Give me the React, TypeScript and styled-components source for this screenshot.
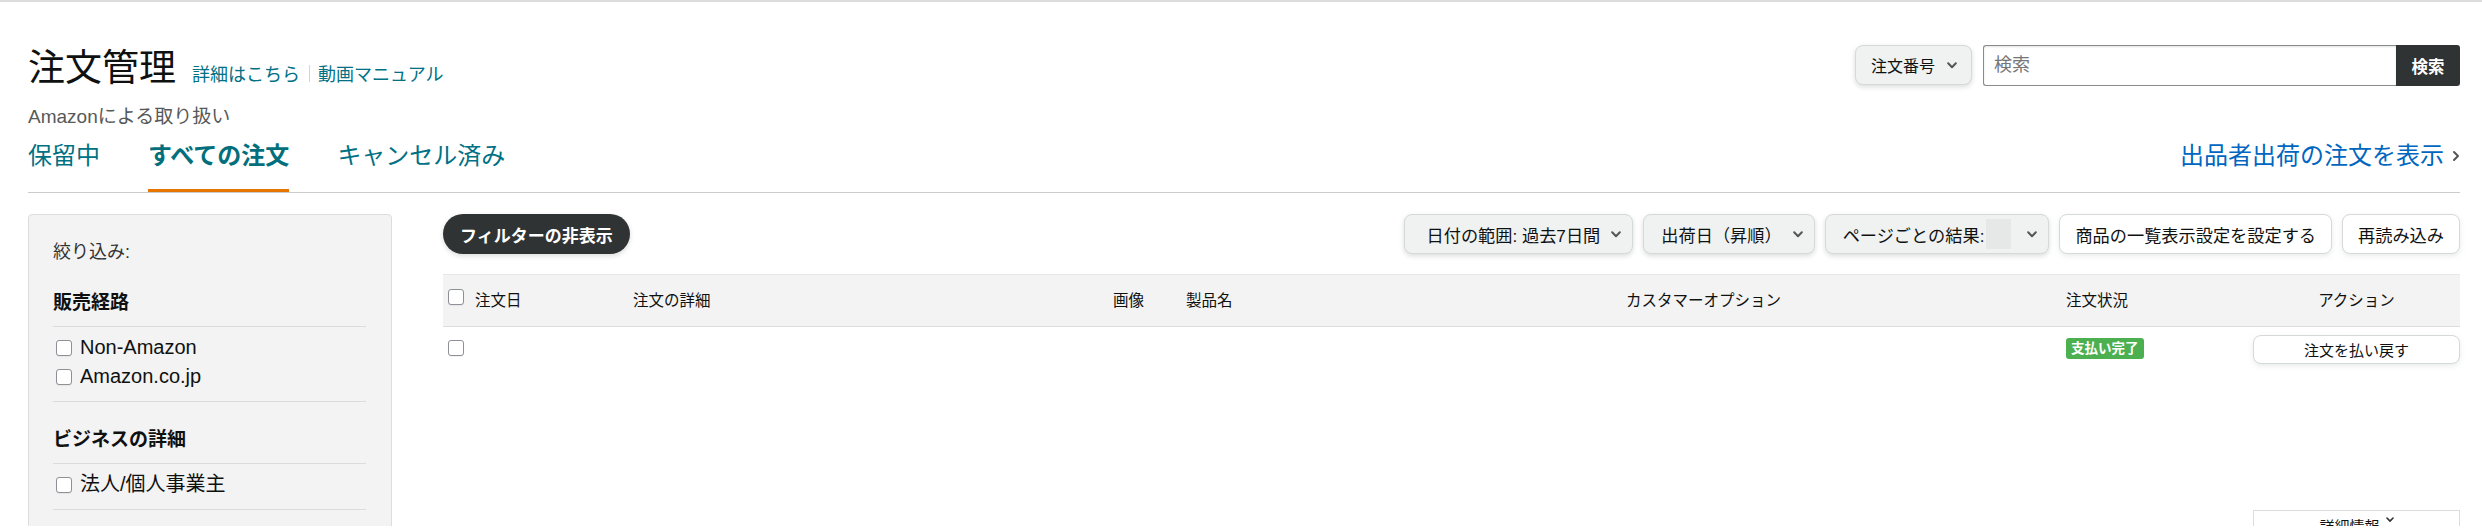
import React from 'react';
import styled, { createGlobalStyle } from 'styled-components';

const GlobalStyle = createGlobalStyle`
  html, body { margin: 0; padding: 0; background: #ffffff; }
  body {
    font-family: "Liberation Sans", "Noto Sans CJK JP", sans-serif;
    color: #0f1111;
  }
  *, *::before, *::after { box-sizing: border-box; }
  button, input { font-family: inherit; }
`;

const Page = styled.div`
  border-top: 2px solid #dcdcdc;
  padding: 0 22px 0 28px;
  height: 526px;
  overflow: hidden;
`;

const HeaderRow = styled.header`
  display: flex;
  justify-content: space-between;
  align-items: flex-start;
  padding-top: 43px;
`;

const TitleBlock = styled.div`
  padding-top: 2px;
`;

const TitleLine = styled.div`
  display: flex;
  align-items: baseline;
`;

const Title = styled.h1`
  margin: 0 16px 0 0;
  font-size: 37px;
  line-height: 44px;
  font-weight: 400;
  color: #0f1111;
`;

const HelpLink = styled.a`
  font-size: 18px;
  line-height: 22px;
  color: #007185;
  text-decoration: none;
`;

const LinkSep = styled.span`
  display: inline-block;
  width: 1px;
  height: 17px;
  margin: 0 8px 0 9px;
  background: #d5d5d5;
  position: relative;
  top: 1px;
`;

const Subtitle = styled.div`
  margin-top: 16px;
  font-size: 19px;
  line-height: 20px;
  color: #565959;
`;

const SearchForm = styled.form`
  display: flex;
  align-items: flex-start;
  margin: 0;
`;

const SelectButton = styled.button`
  display: flex;
  align-items: center;
  justify-content: space-between;
  gap: 12px;
  height: 40px;
  margin-right: 11px;
  padding: 0 14px 0 15px;
  background: #f0f2f2;
  border: 1px solid #d5d9d9;
  border-radius: 8px;
  box-shadow: 0 2px 5px rgba(15, 17, 17, 0.15);
  font-size: 16px;
  color: #0f1111;
  white-space: nowrap;
`;

const SearchInput = styled.input`
  width: 413px;
  height: 41px;
  padding: 0 10px;
  border: 1px solid #888c8c;
  border-right: none;
  border-radius: 3px 0 0 3px;
  box-shadow: inset 0 1px 2px rgba(15, 17, 17, 0.12);
  font-size: 18px;
  color: #0f1111;
  outline: none;
  &::placeholder { color: #767676; }
`;

const SearchButton = styled.button`
  width: 64px;
  height: 41px;
  border: none;
  border-radius: 0 3px 3px 0;
  background: #303333;
  color: #ffffff;
  font-size: 16.5px;
  font-weight: 700;
`;

const TabsRow = styled.div`
  display: flex;
  justify-content: space-between;
  align-items: flex-end;
  margin-top: 15px;
  border-bottom: 1px solid #cccccc;
`;

const Tabs = styled.nav`
  display: flex;
  gap: 48px;
`;

const Tab = styled.a<{ $active?: boolean }>`
  display: block;
  font-size: 24px;
  line-height: 28px;
  padding-bottom: 19px;
  border-bottom: 3px solid ${(p) => (p.$active ? '#e77600' : 'transparent')};
  color: ${(p) => (p.$active ? '#036f7c' : '#007185')};
  font-weight: ${(p) => (p.$active ? 700 : 400)};
  text-decoration: none;
  white-space: nowrap;
`;

const SellerLink = styled.a`
  display: flex;
  align-items: center;
  gap: 8px;
  font-size: 24px;
  line-height: 28px;
  padding-bottom: 22px;
  color: #0066c0;
  text-decoration: none;
  white-space: nowrap;
`;

const Content = styled.div`
  display: flex;
  gap: 51px;
  margin-top: 21px;
`;

const Sidebar = styled.aside`
  flex: none;
  width: 364px;
  min-height: 330px;
  padding: 25px 25px 40px 24px;
  background: #f3f3f3;
  border: 1px solid #dddddd;
  border-radius: 4px;
`;

const FilterTitle = styled.div`
  font-size: 18px;
  line-height: 24px;
  color: #333333;
`;

const FilterHeading = styled.div<{ $first?: boolean }>`
  margin-top: ${(p) => (p.$first ? 27 : 26)}px;
  padding-bottom: 11px;
  border-bottom: 1px solid #dcdcdc;
  font-size: 19px;
  line-height: 24px;
  font-weight: 700;
  color: #0f1111;
`;

const OptionList = styled.div`
  padding: 6px 0 10px;
  border-bottom: 1px solid #dcdcdc;
`;

const OptionRow = styled.label`
  display: flex;
  align-items: center;
  gap: 8px;
  padding-left: 3px;
  font-size: 20px;
  line-height: 29px;
  color: #0f1111;
`;

const Check = styled.input.attrs({ type: 'checkbox' })<{ $lift?: number }>`
  appearance: none;
  -webkit-appearance: none;
  flex: none;
  width: 16px;
  height: 16px;
  margin: 0 0 ${(p) => p.$lift || 0}px 0;
  background: #ffffff;
  border: 1px solid #8d9096;
  border-radius: 3px;
  box-shadow: 0 1px 1px rgba(0, 0, 0, 0.06);
`;

const Main = styled.main`
  flex: 1;
  min-width: 0;
`;

const Toolbar = styled.div`
  display: flex;
  justify-content: space-between;
  align-items: center;
  height: 40px;
`;

const PillButton = styled.button`
  height: 40px;
  padding: 0 17px;
  border: none;
  border-radius: 20px;
  background: #303333;
  color: #ffffff;
  font-size: 17px;
  font-weight: 700;
  box-shadow: 0 2px 5px rgba(15, 17, 17, 0.15);
  white-space: nowrap;
`;

const ToolGroup = styled.div`
  display: flex;
  gap: 10px;
`;

const Dropdown = styled.button<{ $padLeft?: number }>`
  display: flex;
  align-items: center;
  height: 40px;
  padding: 0 11px 0 ${(p) => p.$padLeft || 17}px;
  gap: 11px;
  background: #f0f2f2;
  border: 1px solid #d5d9d9;
  border-radius: 8px;
  box-shadow: 0 2px 5px rgba(15, 17, 17, 0.15);
  font-size: 17.2px;
  color: #0f1111;
  white-space: nowrap;
`;

const ValueBlank = styled.span`
  width: 25px;
  height: 30px;
  margin-left: -9px;
  margin-right: 5px;
  background: #e6e7e7;
`;

const PlainButton = styled.button`
  height: 40px;
  padding: 0 15px;
  background: #ffffff;
  border: 1px solid #d5d9d9;
  border-radius: 8px;
  box-shadow: 0 2px 5px rgba(213, 217, 217, 0.5);
  font-size: 17.2px;
  color: #0f1111;
  white-space: nowrap;
`;

const columns = '190px 480px 73px 440px 440px 187px 1fr';

const TableHead = styled.div`
  display: grid;
  grid-template-columns: ${columns};
  align-items: center;
  height: 53px;
  margin-top: 20px;
  background: #f3f3f3;
  border-top: 1px solid #e7e7e7;
  border-bottom: 1px solid #dddddd;
`;

const HeadCell = styled.div<{ $center?: boolean }>`
  display: flex;
  align-items: center;
  justify-content: ${(p) => (p.$center ? 'center' : 'flex-start')};
  gap: 11px;
  font-size: 15.5px;
  line-height: 20px;
  color: #0f1111;
  white-space: nowrap;
`;

const FirstCell = styled(HeadCell)`
  padding-left: 5px;
`;

const TableRow = styled.div`
  display: grid;
  grid-template-columns: ${columns};
  align-items: start;
  padding-top: 8px;
  height: 56px;
`;

const RowCell = styled.div<{ $offset?: number }>`
  display: flex;
  padding-top: ${(p) => p.$offset || 0}px;
`;

const CheckCell = styled(RowCell)`
  padding-left: 5px;
`;

const StatusBadge = styled.span`
  display: inline-block;
  min-width: 75px;
  height: 21px;
  padding: 0 5px;
  border-radius: 3px;
  background: #4caf50;
  color: #ffffff;
  font-size: 13.5px;
  line-height: 21px;
  font-weight: 700;
  text-align: center;
  white-space: nowrap;
`;

const RefundButton = styled.button`
  width: 100%;
  height: 29px;
  background: #ffffff;
  border: 1px solid #d5d9d9;
  border-radius: 8px;
  box-shadow: 0 2px 5px rgba(213, 217, 217, 0.5);
  font-size: 15px;
  color: #0f1111;
`;

const DetailsRow = styled.div`
  display: flex;
  justify-content: flex-end;
  margin-top: 127px;
`;

const DetailsBox = styled.div`
  display: flex;
  justify-content: center;
  align-items: flex-start;
  gap: 6px;
  width: 207px;
  height: 40px;
  padding-top: 6px;
  border: 1px solid #dddddd;
  font-size: 15px;
  line-height: 20px;
  color: #0f1111;
`;

const ChevronDown = ({ size = 10, color = '#555' }: { size?: number; color?: string }) => (
  <svg width={size} height={size * 0.7} viewBox="0 0 10 7" aria-hidden="true" style={{ flex: 'none' }}>
    <path d="M1.2 1.3 L5 5.2 L8.8 1.3" fill="none" stroke={color} strokeWidth="2" strokeLinecap="round" strokeLinejoin="round" />
  </svg>
);

const ChevronRight = () => (
  <svg width="8" height="12" viewBox="0 0 8 12" aria-hidden="true">
    <path d="M2 2 L6 6 L2 10" fill="none" stroke="#555" strokeWidth="2" strokeLinecap="round" strokeLinejoin="round" />
  </svg>
);

export default function App() {
  return (
    <>
      <GlobalStyle />
      <Page>
        <HeaderRow>
          <TitleBlock>
            <TitleLine>
              <Title>注文管理</Title>
              <HelpLink href="#">詳細はこちら</HelpLink>
              <LinkSep />
              <HelpLink href="#">動画マニュアル</HelpLink>
            </TitleLine>
            <Subtitle>Amazonによる取り扱い</Subtitle>
          </TitleBlock>
          <SearchForm onSubmit={(e) => e.preventDefault()}>
            <SelectButton type="button">
              注文番号
              <ChevronDown />
            </SelectButton>
            <SearchInput placeholder="検索" />
            <SearchButton type="submit">検索</SearchButton>
          </SearchForm>
        </HeaderRow>

        <TabsRow>
          <Tabs>
            <Tab href="#">保留中</Tab>
            <Tab href="#" $active>すべての注文</Tab>
            <Tab href="#">キャンセル済み</Tab>
          </Tabs>
          <SellerLink href="#">
            出品者出荷の注文を表示
            <ChevronRight />
          </SellerLink>
        </TabsRow>

        <Content>
          <Sidebar>
            <FilterTitle>絞り込み:</FilterTitle>
            <FilterHeading $first>販売経路</FilterHeading>
            <OptionList>
              <OptionRow><Check />Non-Amazon</OptionRow>
              <OptionRow><Check />Amazon.co.jp</OptionRow>
            </OptionList>
            <FilterHeading>ビジネスの詳細</FilterHeading>
            <OptionList>
              <OptionRow><Check />法人/個人事業主</OptionRow>
            </OptionList>
          </Sidebar>

          <Main>
            <Toolbar>
              <PillButton>フィルターの非表示</PillButton>
              <ToolGroup>
                <Dropdown $padLeft={22}>
                  日付の範囲: 過去7日間
                  <ChevronDown />
                </Dropdown>
                <Dropdown>
                  出荷日（昇順）
                  <ChevronDown />
                </Dropdown>
                <Dropdown>
                  ページごとの結果:
                  <ValueBlank />
                  <ChevronDown />
                </Dropdown>
                <PlainButton>商品の一覧表示設定を設定する</PlainButton>
                <PlainButton>再読み込み</PlainButton>
              </ToolGroup>
            </Toolbar>

            <TableHead>
              <FirstCell>
                <Check $lift={7} />
                注文日
              </FirstCell>
              <HeadCell>注文の詳細</HeadCell>
              <HeadCell>画像</HeadCell>
              <HeadCell>製品名</HeadCell>
              <HeadCell>カスタマーオプション</HeadCell>
              <HeadCell>注文状況</HeadCell>
              <HeadCell $center>アクション</HeadCell>
            </TableHead>

            <TableRow>
              <CheckCell $offset={5}><Check /></CheckCell>
              <RowCell />
              <RowCell />
              <RowCell />
              <RowCell />
              <RowCell $offset={3}><StatusBadge>支払い完了</StatusBadge></RowCell>
              <RowCell><RefundButton>注文を払い戻す</RefundButton></RowCell>
            </TableRow>

            <DetailsRow>
              <DetailsBox>
                詳細情報
                <ChevronDown size={8} color="#333" />
              </DetailsBox>
            </DetailsRow>
          </Main>
        </Content>
      </Page>
    </>
  );
}
